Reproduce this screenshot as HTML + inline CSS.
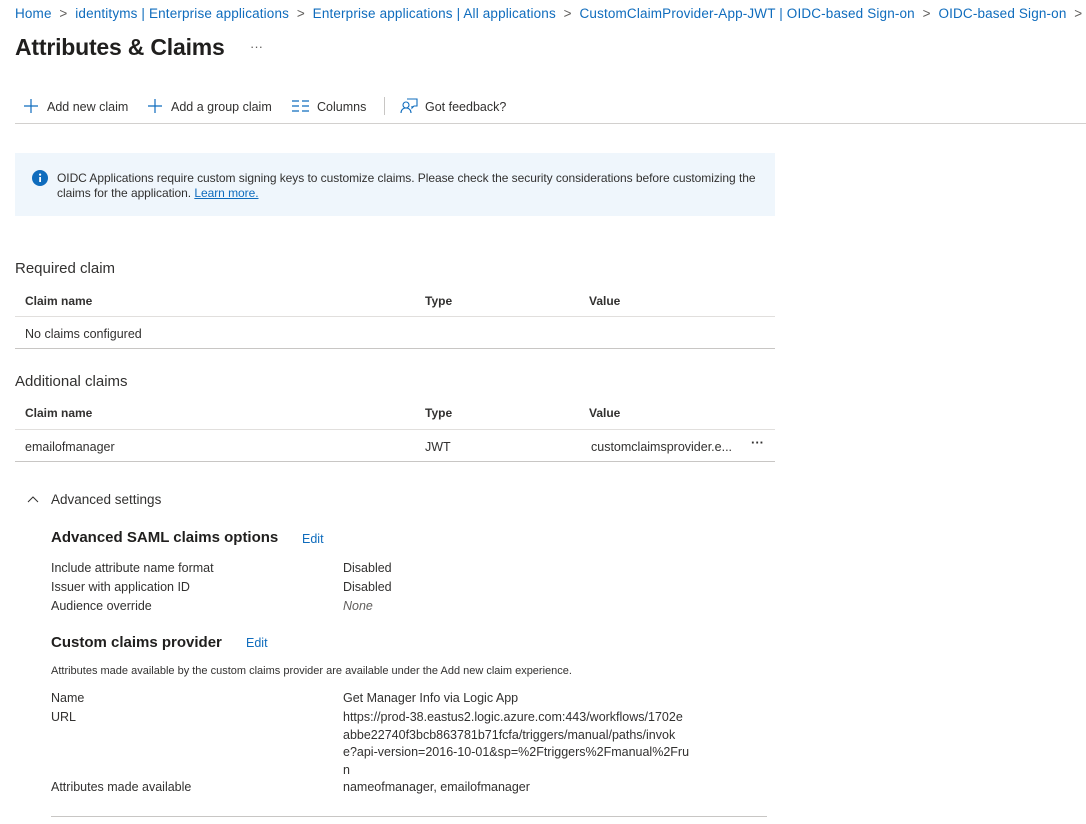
<!DOCTYPE html>
<html><head><meta charset="utf-8"><style>
body{margin:0;width:1086px;height:824px;background:#fff;font-family:"Liberation Sans",sans-serif;color:#323130;position:relative;overflow:hidden}
.a{position:absolute;white-space:nowrap}
.l{color:#0f6cbd}
.t{font-size:12.5px}
.h{font-size:12px;font-weight:bold}
.line{position:absolute;height:1px;background:#e1dfdd}
</style></head><body>
<div class="a l" style="left:15px;top:6px;font-size:13.5px;letter-spacing:0.15px">Home <span style="color:#605e5c">&nbsp;&gt;&nbsp;</span> identityms | Enterprise applications <span style="color:#605e5c">&nbsp;&gt;&nbsp;</span> Enterprise applications | All applications <span style="color:#605e5c">&nbsp;&gt;&nbsp;</span> CustomClaimProvider-App-JWT | OIDC-based Sign-on <span style="color:#605e5c">&nbsp;&gt;&nbsp;</span> OIDC-based Sign-on <span style="color:#605e5c">&nbsp;&gt;</span></div>
<div class="a" style="left:15px;top:34px;font-size:23px;font-weight:bold;color:#201f1e;letter-spacing:-0.2px">Attributes &amp; Claims</div>
<div class="a" style="left:250px;top:39px;font-size:13px;color:#605e5c">···</div>

<svg class="a" style="left:23px;top:98px" width="16" height="16"><path d="M8 1v14M1 8h14" stroke="#0f6cbd" stroke-width="1.2"/></svg>
<div class="a t" style="left:47px;top:100px">Add new claim</div>
<svg class="a" style="left:147px;top:98px" width="16" height="16"><path d="M8 1v14M1 8h14" stroke="#0f6cbd" stroke-width="1.2"/></svg>
<div class="a t" style="left:171px;top:100px">Add a group claim</div>
<svg class="a" style="left:292px;top:100px" width="18" height="12"><path d="M0 1h7M0 6h7M0 11h7M10 1h7M10 6h7M10 11h7" stroke="#0f6cbd" stroke-width="1.3"/></svg>
<div class="a t" style="left:317px;top:100px">Columns</div>
<div class="a" style="left:384px;top:97px;width:1px;height:18px;background:#c8c6c4"></div>
<svg class="a" style="left:400px;top:97px" width="18" height="18"><circle cx="6" cy="8" r="3" fill="none" stroke="#0f6cbd" stroke-width="1.1"/><path d="M1 16c0-3 2-5 5-5s5 2 5 5M7 2h10v7h-3l-2 2v-2" fill="none" stroke="#0f6cbd" stroke-width="1.1"/></svg>
<div class="a t" style="left:425px;top:100px">Got feedback?</div>
<div class="line" style="left:15px;top:123px;width:1071px;background:#d2d0ce"></div>

<div class="a" style="left:15px;top:153px;width:760px;height:63px;background:#eff6fc"></div>
<svg class="a" style="left:32px;top:170px" width="16" height="16"><circle cx="8" cy="8" r="8" fill="#0f6cbd"/><rect x="7.2" y="7" width="1.8" height="5" fill="#fff"/><circle cx="8.1" cy="4.6" r="1.1" fill="#fff"/></svg>
<div class="a" style="left:57px;top:171px;font-size:12px;line-height:15px;letter-spacing:-0.05px;color:#323130">OIDC Applications require custom signing keys to customize claims. Please check the security considerations before customizing the<br>claims for the application. <span class="l" style="text-decoration:underline">Learn more.</span></div>

<div class="a" style="left:15px;top:260px;font-size:15px">Required claim</div>
<div class="a h" style="left:25px;top:294px">Claim name</div>
<div class="a h" style="left:425px;top:294px">Type</div>
<div class="a h" style="left:589px;top:294px">Value</div>
<div class="line" style="left:15px;top:316px;width:760px"></div>
<div class="a t" style="left:25px;top:327px">No claims configured</div>
<div class="line" style="left:15px;top:348px;width:760px;background:#c8c6c4"></div>

<div class="a" style="left:15px;top:373px;font-size:15px">Additional claims</div>
<div class="a h" style="left:25px;top:406px">Claim name</div>
<div class="a h" style="left:425px;top:406px">Type</div>
<div class="a h" style="left:589px;top:406px">Value</div>
<div class="line" style="left:15px;top:429px;width:760px"></div>
<div class="a t" style="left:25px;top:440px">emailofmanager</div>
<div class="a t" style="left:425px;top:440px">JWT</div>
<div class="a t" style="left:591px;top:440px">customclaimsprovider.e...</div>
<div class="a" style="left:751px;top:435px;font-size:13px;font-weight:bold">···</div>
<div class="line" style="left:15px;top:461px;width:760px;background:#c8c6c4"></div>

<svg class="a" style="left:27px;top:495px" width="12" height="8"><path d="M1 7l5-5 5 5" fill="none" stroke="#323130" stroke-width="1"/></svg>
<div class="a" style="left:51px;top:492px;font-size:13.5px">Advanced settings</div>

<div class="a" style="left:51px;top:529px;font-size:15px;font-weight:bold;color:#201f1e">Advanced SAML claims options</div>
<div class="a l t" style="left:302px;top:532px">Edit</div>
<div class="a t" style="left:51px;top:561px">Include attribute name format</div>
<div class="a t" style="left:343px;top:561px">Disabled</div>
<div class="a t" style="left:51px;top:580px">Issuer with application ID</div>
<div class="a t" style="left:343px;top:580px">Disabled</div>
<div class="a t" style="left:51px;top:599px">Audience override</div>
<div class="a t" style="left:343px;top:599px;font-style:italic;color:#605e5c">None</div>

<div class="a" style="left:51px;top:634px;font-size:15px;font-weight:bold;color:#201f1e">Custom claims provider</div>
<div class="a l t" style="left:246px;top:636px">Edit</div>
<div class="a" style="left:51px;top:665px;font-size:11px">Attributes made available by the custom claims provider are available under the Add new claim experience.</div>
<div class="a t" style="left:51px;top:691px">Name</div>
<div class="a t" style="left:343px;top:691px">Get Manager Info via Logic App</div>
<div class="a t" style="left:51px;top:710px">URL</div>
<div class="a t" style="left:343px;top:709px;line-height:17.5px">https://prod-38.eastus2.logic.azure.com:443/workflows/1702e<br>abbe22740f3bcb863781b71fcfa/triggers/manual/paths/invok<br>e?api-version=2016-10-01&amp;sp=%2Ftriggers%2Fmanual%2Fru<br>n</div>
<div class="a t" style="left:51px;top:780px">Attributes made available</div>
<div class="a t" style="left:343px;top:780px">nameofmanager, emailofmanager</div>
<div class="line" style="left:51px;top:816px;width:716px;background:#c8c6c4"></div>
</body></html>
